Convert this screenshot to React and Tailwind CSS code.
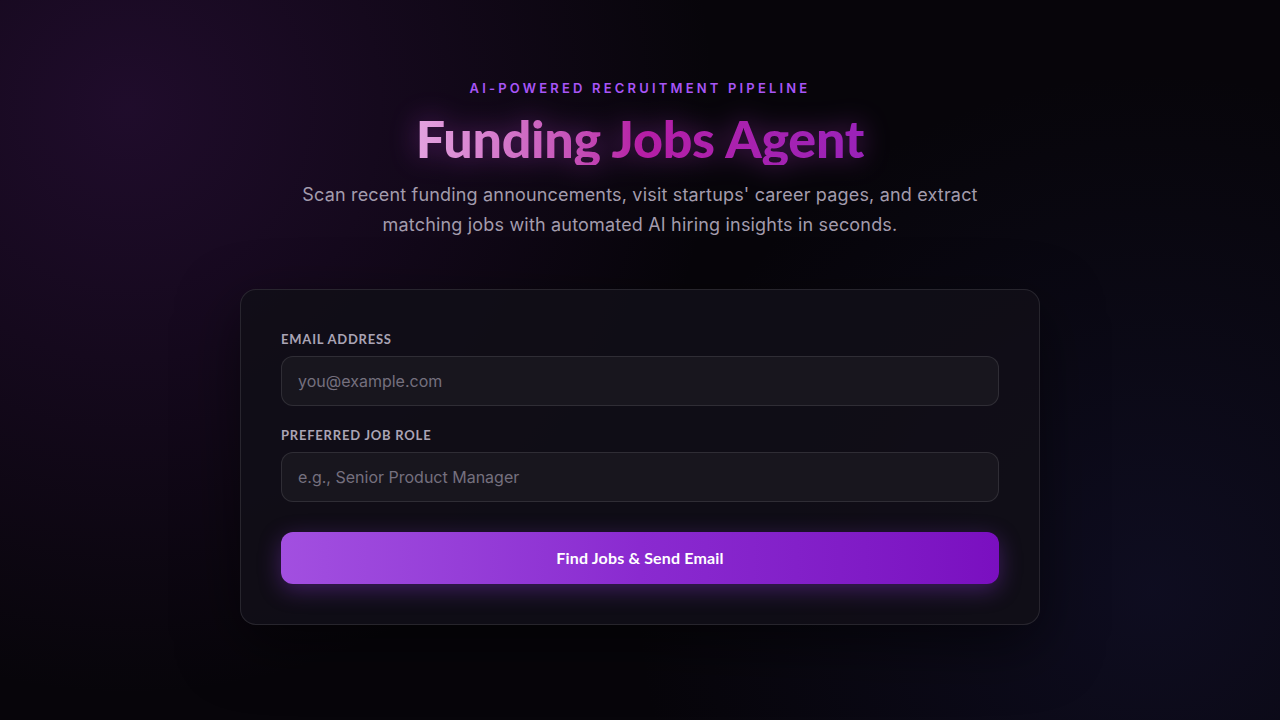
export default function App() {
  return (
    <div
      className="relative min-h-screen w-full overflow-hidden bg-[#07050a] text-white"
      style={{ fontFamily: "Inter, 'Noto Sans', sans-serif" }}
    >
      <div className="pointer-events-none absolute inset-0 bg-[radial-gradient(circle_at_10%_15%,rgba(88,28,120,0.3),transparent_45%),radial-gradient(circle_at_90%_82%,rgba(40,40,110,0.22),transparent_40%)]" />

      <main className="relative flex flex-col items-center px-4 pt-20 pb-16">
        <p className="text-[13px] font-semibold uppercase leading-4 tracking-[0.245em] text-[#a855f7]">
          AI-Powered Recruitment Pipeline
        </p>

        <h1
          className="mt-4 bg-gradient-to-r from-[#e3a3e0] via-[#b61ea6] to-[#9a22b9] bg-clip-text text-[52px] font-black leading-[53px] tracking-[-0.005em] text-transparent drop-shadow-[0_0_14px_rgba(190,60,220,0.45)]"
          style={{ fontFamily: "Lato, 'Noto Sans', sans-serif" }}
        >
          Funding Jobs Agent
        </h1>

        <p className="mt-[15px] max-w-[700px] text-center text-lg leading-[30px] tracking-[0.01em] text-[#a39cad]">
          Scan recent funding announcements, visit startups' career pages, and extract matching jobs with
          automated AI hiring insights in seconds.
        </p>

        <form
          onSubmit={(e) => e.preventDefault()}
          className="mt-[49px] w-[800px] rounded-2xl border border-white/10 bg-[#110e17]/90 px-10 pt-[41px] pb-10 shadow-[0_20px_60px_rgba(0,0,0,0.5)]"
        >
          <label
            htmlFor="email"
            className="mb-[9px] block text-[13px] font-bold uppercase leading-4 tracking-[0.06em] text-[#aaa4b5]"
            style={{ fontFamily: "Lato, 'Noto Sans', sans-serif" }}
          >
            Email Address
          </label>
          <input
            id="email"
            type="email"
            placeholder="you@example.com"
            className="mb-[21px] block h-[50px] w-full rounded-xl border border-white/10 bg-[#18161e] px-4 text-base text-white placeholder:text-[#75707e] focus:outline-none"
          />

          <label
            htmlFor="role"
            className="mb-[9px] block text-[13px] font-bold uppercase leading-4 tracking-[0.06em] text-[#aaa4b5]"
            style={{ fontFamily: "Lato, 'Noto Sans', sans-serif" }}
          >
            Preferred Job Role
          </label>
          <input
            id="role"
            type="text"
            placeholder="e.g., Senior Product Manager"
            className="block h-[50px] w-full rounded-xl border border-white/10 bg-[#18161e] px-4 text-base text-white placeholder:text-[#75707e] focus:outline-none"
          />

          <button
            type="submit"
            className="mt-[30px] h-[52px] w-full rounded-xl bg-gradient-to-r from-[#a24fe0] via-[#8a2ad0] to-[#7a0fc0] text-base font-bold tracking-[0.01em] text-white shadow-[0_6px_22px_rgba(150,60,230,0.35)]"
            style={{ fontFamily: "Lato, 'Noto Sans', sans-serif" }}
          >
            Find Jobs &amp; Send Email
          </button>
        </form>
      </main>
    </div>
  );
}
